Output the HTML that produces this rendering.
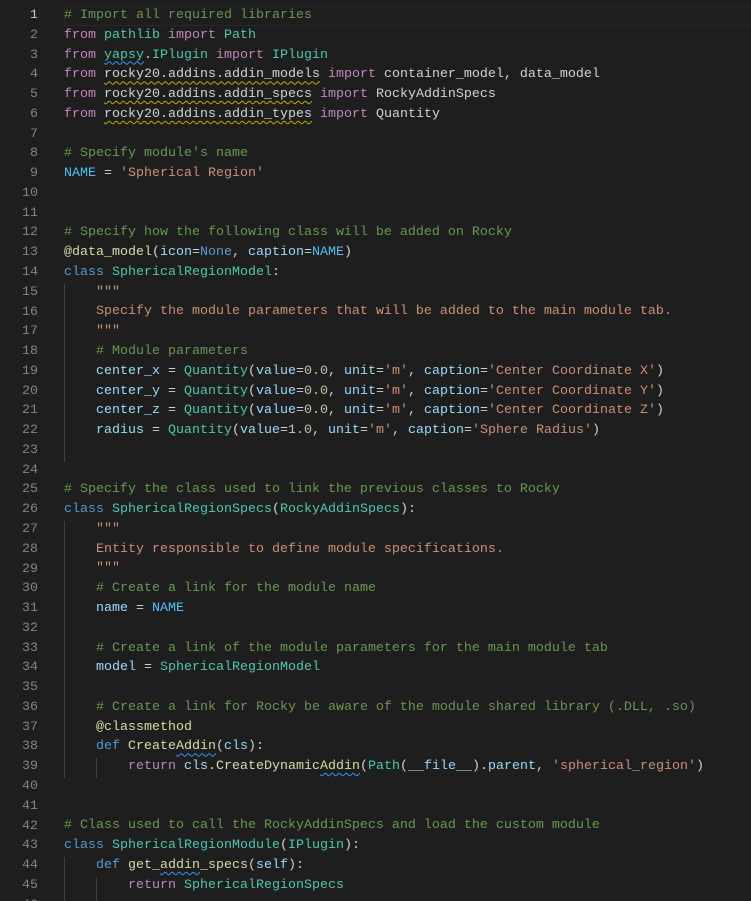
<!DOCTYPE html>
<html><head><meta charset="utf-8"><style>
html,body{margin:0;padding:0;background:#1e1e1e;width:751px;height:901px;overflow:hidden}
#ed{position:relative;width:751px;height:901px;font-family:"Liberation Mono",monospace;font-size:13.33px;color:#d4d4d4}
.ln{position:absolute;left:0;width:38px;text-align:right;color:#858585;line-height:19.77px}
.code{position:absolute;left:64px;top:6px;white-space:pre;margin:0;font-family:"Liberation Mono",monospace;font-size:13.33px;line-height:19.77px}
.cur{position:absolute;left:64px;right:0;top:6px;height:18px;border:1px solid #282828;border-right:none}
.g{position:absolute;width:1px;background:#404040}
.c{color:#6a9955}.k{color:#c586c0}.b{color:#569cd6}.t{color:#4ec9b0}.s{color:#ce9178}.v{color:#9cdcfe}.f{color:#dcdcaa}.n{color:#b5cea8}.C{color:#4fc1ff}
.w{text-decoration:underline wavy #3794ff;text-decoration-thickness:1px;text-underline-offset:3px}
.y{text-decoration:underline wavy #cca700;text-decoration-thickness:1px;text-underline-offset:3px}
.top{position:absolute;left:0;right:0;top:0;height:3px;background:#1e1e1e}
</style></head><body><div id="ed">
<div class="cur"></div>
<div id="lns"></div>
<div class="g" style="left:64px;top:284px;height:178px"></div>
<div class="g" style="left:64px;top:521px;height:257px"></div>
<div class="g" style="left:96px;top:758px;height:20px"></div>
<div class="g" style="left:64px;top:857px;height:44px"></div>
<div class="g" style="left:96px;top:877px;height:24px"></div>
<pre class="code"><span class="c"># Import all required libraries</span>
<span class="k">from</span> <span class="t">pathlib</span> <span class="k">import</span> <span class="t">Path</span>
<span class="k">from</span> <span class="t w">yapsy</span>.<span class="t">IPlugin</span> <span class="k">import</span> <span class="t">IPlugin</span>
<span class="k">from</span> <span class="y">rocky20.addins.addin_models</span> <span class="k">import</span> container_model, data_model
<span class="k">from</span> <span class="y">rocky20.addins.addin_specs</span> <span class="k">import</span> RockyAddinSpecs
<span class="k">from</span> <span class="y">rocky20.addins.addin_types</span> <span class="k">import</span> Quantity

<span class="c"># Specify module's name</span>
<span class="C">NAME</span> = <span class="s">'Spherical Region'</span>


<span class="c"># Specify how the following class will be added on Rocky</span>
<span class="f">@data_model</span>(<span class="v">icon</span>=<span class="b">None</span>, <span class="v">caption</span>=<span class="C">NAME</span>)
<span class="b">class</span> <span class="t">SphericalRegionModel</span>:
    <span class="s">"""</span>
<span class="s">    Specify the module parameters that will be added to the main module tab.</span>
<span class="s">    """</span>
    <span class="c"># Module parameters</span>
    <span class="v">center_x</span> = <span class="t">Quantity</span>(<span class="v">value</span>=<span class="n">0.0</span>, <span class="v">unit</span>=<span class="s">'m'</span>, <span class="v">caption</span>=<span class="s">'Center Coordinate X'</span>)
    <span class="v">center_y</span> = <span class="t">Quantity</span>(<span class="v">value</span>=<span class="n">0.0</span>, <span class="v">unit</span>=<span class="s">'m'</span>, <span class="v">caption</span>=<span class="s">'Center Coordinate Y'</span>)
    <span class="v">center_z</span> = <span class="t">Quantity</span>(<span class="v">value</span>=<span class="n">0.0</span>, <span class="v">unit</span>=<span class="s">'m'</span>, <span class="v">caption</span>=<span class="s">'Center Coordinate Z'</span>)
    <span class="v">radius</span> = <span class="t">Quantity</span>(<span class="v">value</span>=<span class="n">1.0</span>, <span class="v">unit</span>=<span class="s">'m'</span>, <span class="v">caption</span>=<span class="s">'Sphere Radius'</span>)


<span class="c"># Specify the class used to link the previous classes to Rocky</span>
<span class="b">class</span> <span class="t">SphericalRegionSpecs</span>(<span class="t">RockyAddinSpecs</span>):
    <span class="s">"""</span>
<span class="s">    Entity responsible to define module specifications.</span>
<span class="s">    """</span>
    <span class="c"># Create a link for the module name</span>
    <span class="v">name</span> = <span class="C">NAME</span>

    <span class="c"># Create a link of the module parameters for the main module tab</span>
    <span class="v">model</span> = <span class="t">SphericalRegionModel</span>

    <span class="c"># Create a link for Rocky be aware of the module shared library (.DLL, .so)</span>
    <span class="f">@classmethod</span>
    <span class="b">def</span> <span class="f">Create<span class="w">Addin</span></span>(<span class="v">cls</span>):
        <span class="k">return</span> <span class="v">cls</span>.<span class="f">CreateDynamic<span class="w">Addin</span></span>(<span class="t">Path</span>(<span class="v">__file__</span>).<span class="v">parent</span>, <span class="s">'spherical_region'</span>)


<span class="c"># Class used to call the RockyAddinSpecs and load the custom module</span>
<span class="b">class</span> <span class="t">SphericalRegionModule</span>(<span class="t">IPlugin</span>):
    <span class="b">def</span> <span class="f">get_<span class="w">addin</span>_specs</span>(<span class="v">self</span>):
        <span class="k">return</span> <span class="t">SphericalRegionSpecs</span>
</pre>
<div class="top"></div>
</div>
<script>
var h='';for(var i=1;i<=46;i++){h+='<div class="ln" style="top:'+(6+(i-1)*19.77)+'px;'+(i==1?'color:#c6c6c6':'')+'">'+i+'</div>';}
document.getElementById('lns').innerHTML=h;
</script>
</body></html>
